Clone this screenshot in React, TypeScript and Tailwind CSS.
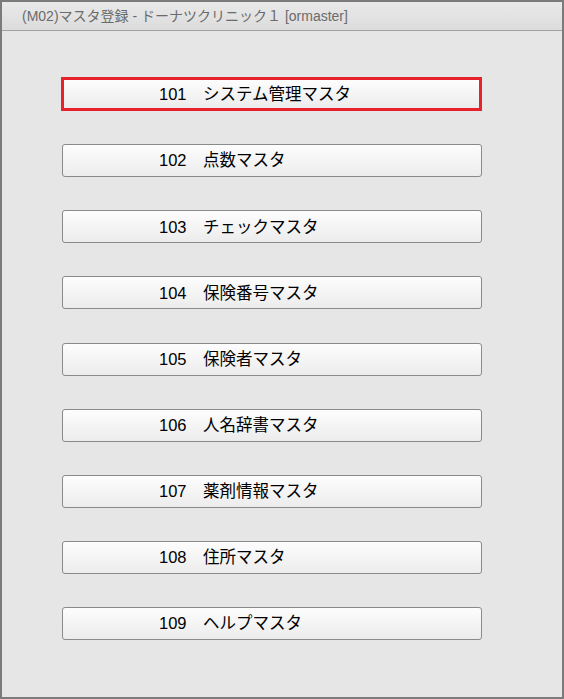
const items = [
  { no: '101', label: 'システム管理マスタ' },
  { no: '102', label: '点数マスタ' },
  { no: '103', label: 'チェックマスタ' },
  { no: '104', label: '保険番号マスタ' },
  { no: '105', label: '保険者マスタ' },
  { no: '106', label: '人名辞書マスタ' },
  { no: '107', label: '薬剤情報マスタ' },
  { no: '108', label: '住所マスタ' },
  { no: '109', label: 'ヘルプマスタ' },
]

export default function App() {
  return (
    <div
      className="w-[564px] h-[699px] border-2 border-[#7b7b7b] bg-[#e6e6e6] flex flex-col"
      style={{ fontFamily: '"Liberation Sans", "Noto Sans CJK JP", sans-serif' }}
    >
      {/* Title bar */}
      <div className="h-[29px] shrink-0 flex items-center pl-[20px] bg-gradient-to-b from-[#e9e9e9] to-[#dcdcdc] border-b border-[#a3a3a3]">
        <span className="text-[14px] text-[#6b6b6b] whitespace-nowrap">
          (M02)マスタ登録 - ドーナツクリニック１ [ormaster]
        </span>
      </div>

      {/* Buttons */}
      <div className="flex flex-col gap-[33.15px] pt-[47px] pl-[60px]">
        {items.map((item, index) => (
          <button
            key={item.no}
            className={
              index === 0
                ? 'w-[421px] h-[34px] -ml-[1px] -mt-[1px] border-[3px] border-[#e8212b] bg-gradient-to-b from-[#fdfdfd] to-[#ececec] flex items-center pl-[95px] text-left'
                : 'w-[420px] h-[33px] rounded-[3px] border border-[#8a8a8a] bg-gradient-to-b from-[#fdfdfd] to-[#ececec] flex items-center pl-[96px] text-left'
            }
          >
            <span className="text-[16.5px] text-black whitespace-nowrap leading-none">
              {item.no}　{item.label}
            </span>
          </button>
        ))}
      </div>
    </div>
  )
}
